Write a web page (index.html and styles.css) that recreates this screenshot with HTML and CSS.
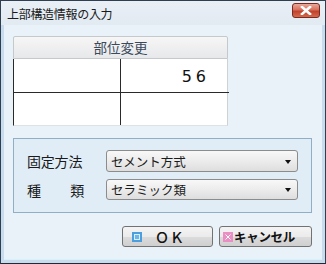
FILE: index.html
```html
<!DOCTYPE html>
<html lang="ja">
<head>
<meta charset="utf-8">
<link rel="stylesheet" href="styles.css">
</head>
<body>
<div class="window">
  <div class="titlebar">
    <span class="title">上部構造情報の入力</span>
    <span class="close">
      <svg width="12" height="9" viewBox="0 0 12 9"><path d="M2 1 L10 8 M10 1 L2 8" stroke="#fff" stroke-width="2.6" stroke-linecap="square"/><path d="M2 1 L10 8 M10 1 L2 8" stroke="#fff" stroke-width="1.6"/></svg>
    </span>
  </div>
  <div class="client">
    <div class="grid">
      <div class="grid-head">部位変更</div>
      <div class="grid-body">
        <div class="cell c1"></div>
        <div class="cell c2 num">56</div>
        <div class="cell c1 last"></div>
        <div class="cell c2 last"></div>
      </div>
    </div>
    <div class="group">
      <div class="row">
        <span class="label">固定方法</span>
        <div class="combo"><span>セメント方式</span><i class="arrow"></i></div>
      </div>
      <div class="row">
        <span class="label spread"><span>種</span><span>類</span></span>
        <div class="combo combo2"><span>セラミック類</span><i class="arrow"></i></div>
      </div>
    </div>
    <div class="buttons">
      <button class="btn ok">
        <svg width="10" height="10" viewBox="0 0 10 10"><rect x="0" y="0" width="10" height="10" fill="#4c9fdc"/><rect x="2.5" y="2.5" width="5" height="5" fill="#6db6ea" stroke="#d7eefc" stroke-width="1"/></svg>
        <span class="oktext">ＯＫ</span>
      </button>
      <button class="btn cancel">
        <svg width="10" height="10" viewBox="0 0 10 10"><rect x="0" y="0" width="10" height="10" fill="#ea8fc3"/><path d="M2.5 2.5 L7.5 7.5 M7.5 2.5 L2.5 7.5" stroke="#fff" stroke-width="1"/></svg>
        <span class="canceltext">キャンセル</span>
      </button>
    </div>
  </div>
</div>
</body>
</html>
```
FILE: styles.css
```css
* { box-sizing: border-box; }
html, body { margin: 0; padding: 0; }
body {
  width: 326px;
  height: 264px;
  font-family: "Noto Sans CJK JP", "Noto Sans", sans-serif;
  background: #ffffff;
}
.window {
  width: 326px;
  height: 264px;
  border: 1px solid #2e3f52;
  background: #c9dcee;
  padding: 0 3px 3px 3px;
  display: flex;
  flex-direction: column;
  border-bottom-color: #1d2a38;
}
.titlebar {
  height: 24px;
  display: flex;
  align-items: center;
  justify-content: space-between;
  background: linear-gradient(#e9eff5, #e2eaf2);
  margin: 0 -3px;
  padding-left: 6px;
  padding-right: 5px;
}
.title {
  font-size: 12px;
  color: #1a1a1a;
  letter-spacing: -0.3px;
  margin-top: 1px;
}
.close {
  width: 28px;
  height: 15px;
  margin-top: -5px;
  border: 1px solid #7a2a20;
  border-radius: 3px;
  background: linear-gradient(#eaa899 0%, #d86f5c 45%, #c2412b 55%, #d26a4e 100%);
  display: flex;
  align-items: center;
  justify-content: center;
}
.client {
  flex: 1;
  background: #e9f2f9;
  padding: 11px 0 0 9px;
  border-bottom: 1px solid #d5f3fb;
}
.grid {
  width: 215px;
}
.grid-head {
  height: 23px;
  border: 1px solid #c6c9cc;
  border-radius: 2px 2px 0 0;
  background: linear-gradient(#f6f6f6, #e7e8ea);
  text-align: center;
  font-size: 13.5px;
  line-height: 21px;
  color: #3b4a5a;
}
.grid-body {
  display: grid;
  grid-template-columns: 107px 108px;
  grid-template-rows: 34px 32px;
  background: #ffffff;
  border-left: 1px solid #2a2a2a;
  border-right: 1px solid #cfd2d5;
  border-bottom: 1px solid #dfe2e5;
}
.cell {
  border-bottom: 1px solid #2a2a2a;
}
.cell.last { border-bottom: none; }
.c1 { border-right: 1px solid #2a2a2a; }
.num {
  text-align: right;
  font-family: "DejaVu Sans", sans-serif;
  font-size: 16px;
  letter-spacing: 4px;
  padding-right: 19px;
  line-height: 36px;
  color: #111;
}
.group {
  margin-top: 12px;
  width: 299px;
  height: 75px;
  border: 1px solid #90aec5;
  background: #e0edf6;
  padding: 11px 0 0 13px;
  display: flex;
  flex-direction: column;
  gap: 7px;
}
.row {
  display: flex;
  align-items: center;
}
.label {
  width: 79px;
  font-size: 14px;
  color: #1a1a1a;
  letter-spacing: -0.2px;
}
.spread {
  display: flex;
  justify-content: space-between;
  width: 57px;
  margin-right: 22px;
}
.combo {
  width: 192px;
  height: 22px;
  border: 1px solid #8c8c8c;
  border-radius: 3px;
  background: linear-gradient(#f8f8f8 0%, #ececec 50%, #dedede 100%);
  display: flex;
  align-items: center;
  justify-content: space-between;
  padding: 0 6px 0 4px;
  font-size: 12.5px;
  color: #1a1a1a;
}
.combo2 { height: 21px; }
.arrow {
  width: 0;
  height: 0;
  border-left: 3.5px solid transparent;
  border-right: 3.5px solid transparent;
  border-top: 4px solid #111;
  margin-top: 1px;
}
.buttons {
  margin-top: 13px;
  width: 299px;
  display: flex;
  justify-content: flex-end;
  gap: 6px;
}
.btn {
  height: 21px;
  border: 1px solid #727272;
  border-radius: 3px;
  background: linear-gradient(#f4f4f4 0%, #ebebeb 50%, #dcdcdc 51%, #cfcfcf 100%);
  display: flex;
  align-items: center;
  padding: 0 0 0 9px;
  font-family: "Noto Sans CJK JP", sans-serif;
  color: #111;
  margin: 0;
}
.ok { width: 91px; }
.cancel { width: 93px; padding-left: 3px; }
.oktext {
  font-size: 14px;
  font-weight: 500;
  letter-spacing: 1px;
  margin-left: 13px;
}
.canceltext {
  font-size: 12.5px;
  font-weight: 700;
  margin-left: 1px;
  letter-spacing: -0.3px;
}
```
